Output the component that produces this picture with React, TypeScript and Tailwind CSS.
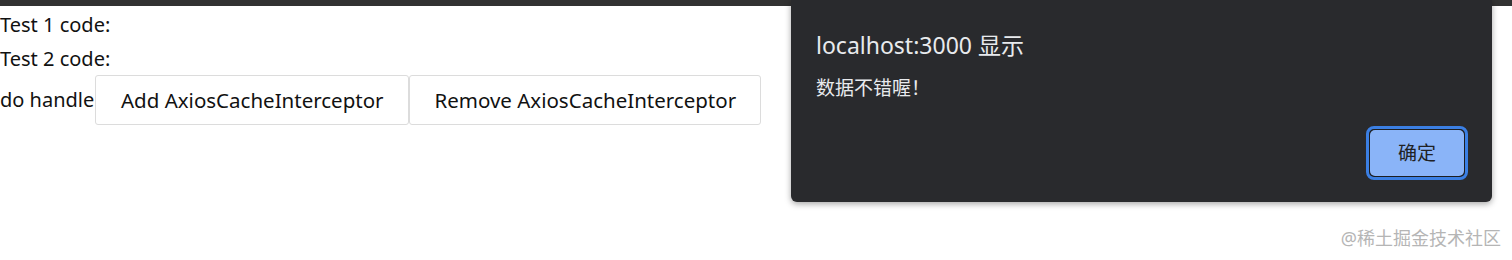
import React from "react";

const sans = '"Noto Sans", "Noto Sans CJK SC", sans-serif';

export default function App() {
  return (
    <div className="relative w-[1512px] h-[260px] bg-white overflow-hidden" style={{ fontFamily: sans }}>
      <div className="h-[6px] bg-[#323232]" />
      <div className="pt-[2px] text-[20px] text-[#111] leading-[34px]">
        <div className="h-[34px]">Test 1 code:</div>
        <div className="h-[34px]">Test 2 code:</div>
        <div className="flex items-center h-[50px] -mt-[1px]">
          <span>do handle</span>
          <button className="h-[50px] w-[314px] ml-[1px] border border-[#dcdcdc] rounded-[3px] bg-white text-[20.5px] text-[#111]">
            Add AxiosCacheInterceptor
          </button>
          <button className="h-[50px] w-[352px] border border-[#dcdcdc] rounded-[3px] bg-white text-[20.5px] text-[#111]">
            Remove AxiosCacheInterceptor
          </button>
        </div>
      </div>

      <div className="absolute left-[791px] top-0 w-[701px] h-[202px] bg-[#292a2d] rounded-b-[6px] shadow-[0_2px_6px_rgba(0,0,0,0.35)] flex flex-col">
        <div className="pl-[25px] pt-[29px] text-[23px] leading-[32px] text-[#e8eaed]">localhost:3000 显示</div>
        <div className="pl-[25px] pt-[14px] text-[19px] leading-[26px] text-[#e8eaed]">数据不错喔！</div>
        <div className="flex justify-end pr-[24px] mt-[25px]">
          <div className="rounded-[8px] border-[3px] border-[#3b7fe3] p-[1px] bg-[#1d1e20]">
            <button className="w-[94px] h-[46px] rounded-[5px] bg-[#8ab4f8] text-[19px] text-[#202124]">确定</button>
          </div>
        </div>
      </div>

      <div className="absolute right-[11px] top-[225px] text-[18px] leading-[26px] text-[#b5b5b5]">@稀土掘金技术社区</div>
    </div>
  );
}
